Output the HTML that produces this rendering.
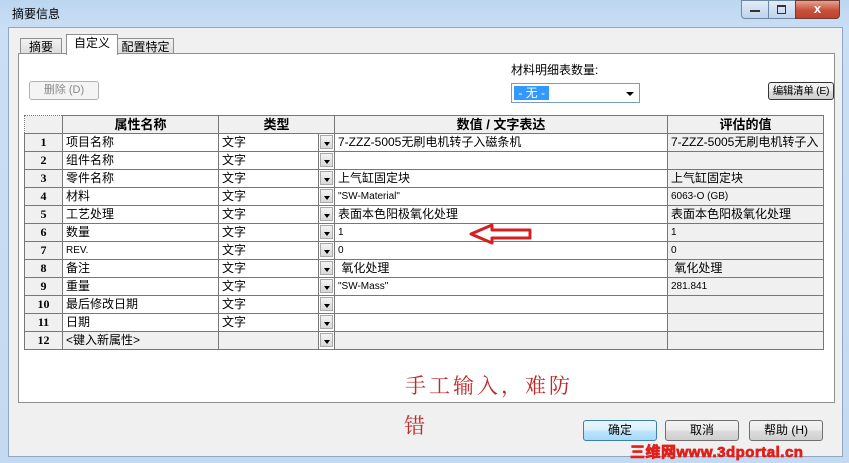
<!DOCTYPE html><html><head><meta charset="utf-8"><style>
body{margin:0;width:849px;height:463px;overflow:hidden;background:#c4dcf2;font-family:"Liberation Sans","Noto Sans CJK SC",sans-serif;font-size:12px;position:relative}
.a{position:absolute}
.frame{left:0;top:0;width:849px;height:463px;background:linear-gradient(#bcd6f0,#c9dff4 30px,#c3daf1)}
.dlg{left:8px;top:27px;width:833px;height:428px;background:#f0f0f0;border:1px solid #8ea8c4}
.tab{top:36px;height:17px;border:1px solid #8e8f8f;border-bottom:none;background:linear-gradient(#f2f2f2,#dcdcdc);font-size:12px;line-height:17px;text-align:center}
.panel{left:18px;top:53px;width:815px;height:348px;background:#fff;border:1px solid #8e8f8f}
.btn{border:1px solid #707070;border-radius:3px;background:linear-gradient(#f2f2f2,#ebebeb 50%,#dddddd 51%,#cfcfcf);text-align:center;font-size:11px}
table{border-collapse:collapse;position:absolute;left:24px;top:115px;table-layout:fixed}
td{border:1px solid #777;height:17px;padding:0 3px;font-size:12px;white-space:nowrap;overflow:hidden;line-height:17px}
td.n{background:#f0f0f0;text-align:center;font-weight:bold;font-family:"Liberation Serif","Noto Serif CJK SC",serif}
td.h{background:#f0f0f0;text-align:center;font-weight:bold;font-size:13px}
td.dd{padding:0;background:#fff;position:relative}
td.dd i{position:absolute;right:1px;top:1px;width:13px;height:14px;background:linear-gradient(#f4f4f4,#d8d8d8);border:1px solid #aaa;box-sizing:border-box}
td.dd i:after{content:"";position:absolute;left:3px;top:6px;border-left:3px solid transparent;border-right:3px solid transparent;border-top:4px solid #000}
td.g{background:#f0f0f0}
.sm{font-size:10px}
</style></head><body>
<div class="a frame"></div>
<div class="a" style="left:12px;top:5px;font-size:12px">摘要信息</div>
<div class="a" style="left:741px;top:0;width:26px;height:17px;border:1px solid #6d87a8;border-radius:0 0 0 4px;background:linear-gradient(#e2ecf8,#bfd3ea)"><div class="a" style="left:8px;top:9px;width:10px;height:2px;background:#333"></div></div>
<div class="a" style="left:768px;top:0;width:26px;height:17px;border:1px solid #6d87a8;background:linear-gradient(#e2ecf8,#bfd3ea)"><div class="a" style="left:8px;top:4px;width:7px;height:6px;border:1px solid #333;border-top-width:2px"></div></div>
<div class="a" style="left:795px;top:0;width:43px;height:17px;border:1px solid #6d3b32;border-radius:0 0 4px 0;background:linear-gradient(#e8a291,#c7503a 55%,#c0412d);color:#fff;font-weight:bold;text-align:center;line-height:16px;font-size:13px">x</div>
<div class="a dlg"></div>
<div class="a tab" style="left:20px;width:40px;top:38px;height:15px">摘要</div>
<div class="a tab" style="left:66px;width:50px;top:34px;height:20px;background:#fff;z-index:2">自定义</div>
<div class="a tab" style="left:117px;width:55px;top:38px;height:15px">配置特定</div>
<div class="a panel"></div>
<div class="a btn" style="left:29px;top:81px;width:68px;height:17px;line-height:17px;color:#888;border-color:#adb2b5;background:#f4f4f4">删除 (D)</div>
<div class="a" style="left:511px;top:61px;font-size:12px">材料明细表数量:</div>
<div class="a" style="left:511px;top:83px;width:127px;height:18px;border:1px solid #7a9cc0;background:#fff"><span class="a" style="left:2px;top:2px;background:#3399ff;color:#fff;padding:0 1px;font-size:12px;line-height:14px">&nbsp;- 无 -&nbsp;</span><span class="a" style="left:114px;top:8px;border-left:4px solid transparent;border-right:4px solid transparent;border-top:4px solid #000"></span></div>
<div class="a btn" style="left:768px;top:82px;width:64px;height:16px;line-height:16px;border-color:#333;font-size:10.5px;letter-spacing:-0.3px">编辑清单 (E)</div>
<table>
<colgroup><col style="width:38px"><col style="width:156px"><col style="width:100px"><col style="width:16px"><col style="width:333px"><col style="width:156px"></colgroup>
<tr><td class="h" style="border-style:dotted"></td><td class="h">属性名称</td><td class="h" colspan="2">类型</td><td class="h">数值 / 文字表达</td><td class="h">评估的值</td></tr>
<tr><td class="n">1</td><td>项目名称</td><td>文字</td><td class="dd"><i></i></td><td>7-ZZZ-5005无刷电机转子入磁条机</td><td class="g">7-ZZZ-5005无刷电机转子入</td></tr>
<tr><td class="n">2</td><td>组件名称</td><td>文字</td><td class="dd"><i></i></td><td></td><td class="g"></td></tr>
<tr><td class="n">3</td><td>零件名称</td><td>文字</td><td class="dd"><i></i></td><td>上气缸固定块</td><td class="g">上气缸固定块</td></tr>
<tr><td class="n">4</td><td>材料</td><td>文字</td><td class="dd"><i></i></td><td class="sm">"SW-Material"</td><td class="g sm">6063-O (GB)</td></tr>
<tr><td class="n">5</td><td>工艺处理</td><td>文字</td><td class="dd"><i></i></td><td>表面本色阳极氧化处理</td><td class="g">表面本色阳极氧化处理</td></tr>
<tr><td class="n">6</td><td>数量</td><td>文字</td><td class="dd"><i></i></td><td class="sm">1</td><td class="g sm">1</td></tr>
<tr><td class="n">7</td><td class="sm">REV.</td><td>文字</td><td class="dd"><i></i></td><td class="sm">0</td><td class="g sm">0</td></tr>
<tr><td class="n">8</td><td>备注</td><td>文字</td><td class="dd"><i></i></td><td>&nbsp;氧化处理</td><td class="g">&nbsp;氧化处理</td></tr>
<tr><td class="n">9</td><td>重量</td><td>文字</td><td class="dd"><i></i></td><td class="sm">"SW-Mass"</td><td class="g sm">281.841</td></tr>
<tr><td class="n">10</td><td>最后修改日期</td><td>文字</td><td class="dd"><i></i></td><td></td><td class="g"></td></tr>
<tr><td class="n">11</td><td>日期</td><td>文字</td><td class="dd"><i></i></td><td></td><td class="g"></td></tr>
<tr><td class="n">12</td><td class="g">&lt;键入新属性&gt;</td><td class="g"></td><td class="dd"><i></i></td><td class="g"></td><td class="g"></td></tr>
</table>
<svg class="a" style="left:468px;top:222px" width="66" height="24"><path d="M3 12 L24 3 L24 8 L62 8 L62 16 L24 16 L24 21 Z" fill="none" stroke="#d42020" stroke-width="3" stroke-linejoin="round"/></svg>
<div class="a" style="left:405px;top:370px;color:#c0282a;font-size:21px;font-family:'Noto Serif CJK SC',serif;letter-spacing:3px">手工输入，难防</div>
<div class="a" style="left:404px;top:410px;color:#c0282a;font-size:21px;font-family:'Noto Serif CJK SC',serif">错</div>
<div class="a btn" style="left:583px;top:420px;width:72px;height:19px;line-height:19px;border-color:#3c7fb1;background:linear-gradient(#eaf6fd,#d9f0fc 50%,#bee6fd 51%,#a7d9f5);font-size:12px">确定</div>
<div class="a btn" style="left:665px;top:420px;width:72px;height:19px;line-height:19px;font-size:12px">取消</div>
<div class="a btn" style="left:749px;top:420px;width:72px;height:19px;line-height:19px;font-size:12px">帮助 (H)</div>
<div class="a" style="left:630px;top:441px;color:#e0201c;font-weight:bold;font-size:15px;font-family:'Liberation Sans','Noto Sans CJK SC',sans-serif;-webkit-text-stroke:0.8px #e0201c;letter-spacing:0.5px">三维网www.3dportal.cn</div>
</body></html>
